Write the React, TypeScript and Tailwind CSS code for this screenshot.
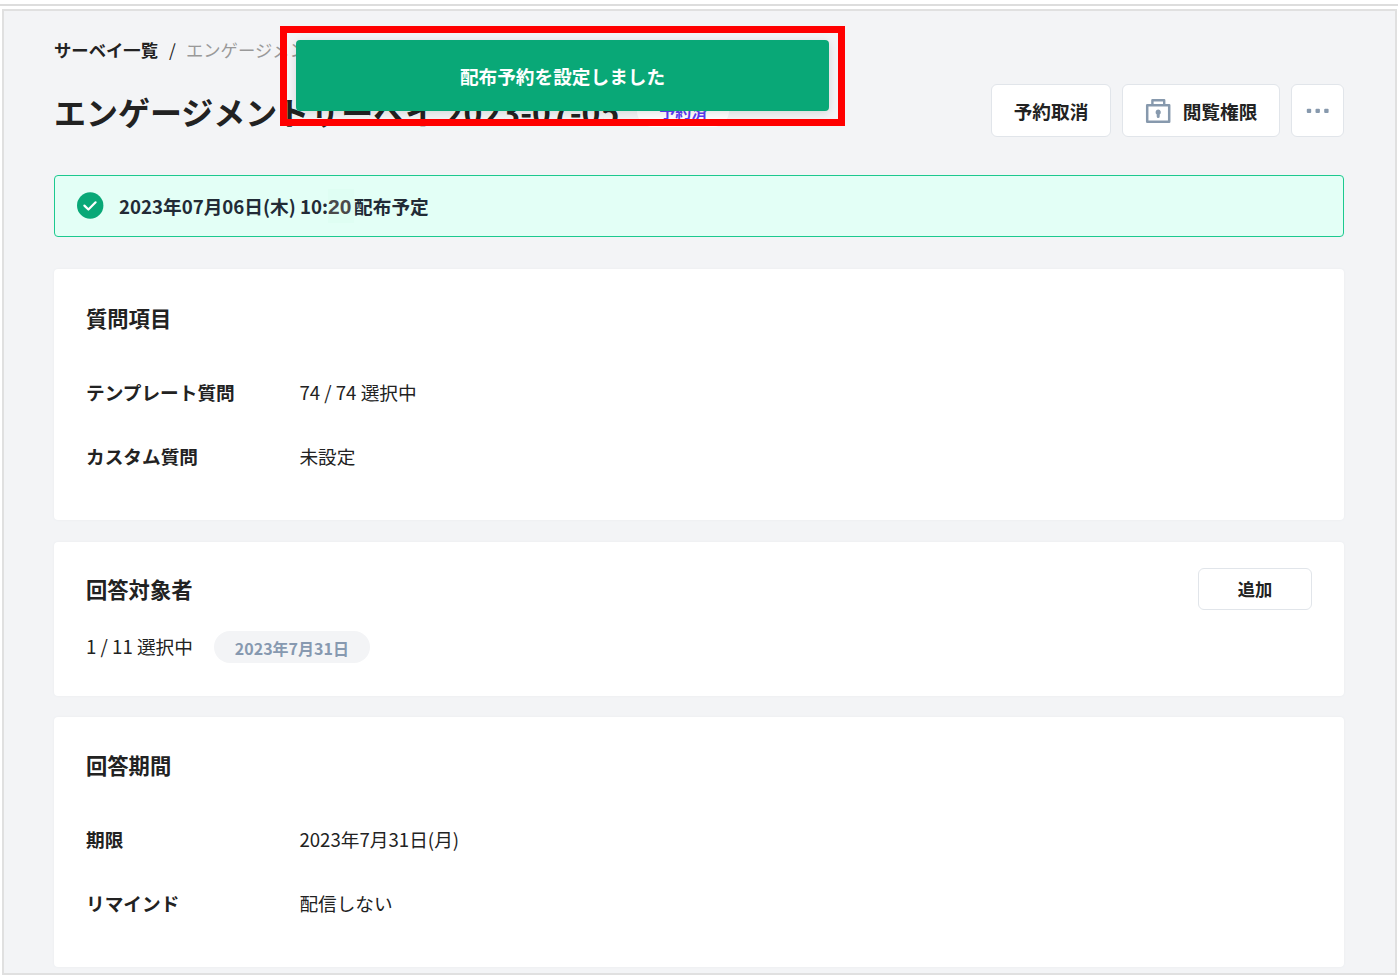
import type { ReactNode } from "react";

type RowProps = {
  label: string;
  value: string;
};

function Row({ label, value }: RowProps) {
  return (
    <div className="flex h-16 items-center text-[18.67px]">
      <span className="w-[213.4px] font-bold">{label}</span>
      <span>{value}</span>
    </div>
  );
}

type CardProps = {
  title: string;
  className: string;
  action?: ReactNode;
  children: ReactNode;
};

function Card({ title, className, action, children }: CardProps) {
  return (
    <section className={`rounded bg-white px-8 shadow-[0_0_2px_#e6e8ec] ${className}`}>
      <div className="flex items-center justify-between">
        <h2 className="text-[21.3px] leading-8 font-bold">{title}</h2>
        {action}
      </div>
      {children}
    </section>
  );
}

function LockIcon() {
  return (
    <svg width="26" height="26" viewBox="0 0 26 26" fill="none">
      <path d="M2.2 7.2h22v16.6h-22z" stroke="#8799ad" strokeWidth="2.5" strokeLinejoin="round" />
      <path d="M7.4 7V2.2h11.8V7" stroke="#8799ad" strokeWidth="2.4" strokeLinejoin="round" />
      <path
        d="M13.2 11.6a2.7 2.7 0 0 1 1.5 4.9v1.9a1.5 1.5 0 0 1-3 0v-1.9a2.7 2.7 0 0 1 1.5-4.9z"
        fill="#8799ad"
      />
    </svg>
  );
}

function CheckIcon() {
  return (
    <svg className="mb-0.5" width="27" height="27" viewBox="0 0 27 27" fill="none">
      <circle cx="13.2" cy="13.5" r="13.2" fill="#09a877" />
      <path
        d="M7.4 13.6l4 3.9 7.2-7.2"
        stroke="#fff"
        strokeWidth="2.2"
        strokeLinecap="round"
        strokeLinejoin="round"
      />
    </svg>
  );
}

function MoreIcon() {
  return (
    <svg width="24" height="6" viewBox="0 0 24 6" fill="#8799ad">
      <rect x="0.8" y="0.8" width="4.4" height="4.2" rx="1" />
      <rect x="9.5" y="0.8" width="4.4" height="4.2" rx="1" />
      <rect x="18.2" y="0.8" width="4.4" height="4.2" rx="1" />
    </svg>
  );
}

function Header() {
  return (
    <header>
      <nav className="flex h-6 items-center text-[17.33px]">
        <span className="font-bold">サーベイ一覧</span>
        <span className="ml-[11px] w-[17px]">/</span>
        <span className="text-[#999]">エンゲージメントサーベイ 2023-07-05</span>
      </nav>
      <div className="mt-[22px] flex h-[53px] items-center">
        <h1 className="text-[32px] leading-[48px] font-bold whitespace-nowrap">
          エンゲージメントサーベイ 2023-07-05
        </h1>
        <span className="ml-[18px] flex h-8 w-[92px] items-center justify-center rounded-full bg-white text-base font-bold text-[#5c3df5]">
          予約済
        </span>
        <div className="ml-auto flex gap-[11px] text-[18.67px] font-bold">
          <button className="h-[53px] w-[120px] rounded-md border border-[#e1e5ea] bg-white">
            予約取消
          </button>
          <button className="flex h-[53px] w-[158px] items-center justify-center gap-3 rounded-md border border-[#e1e5ea] bg-white">
            <LockIcon />
            閲覧権限
          </button>
          <button className="flex h-[53px] w-[53px] items-center justify-center rounded-md border border-[#e1e5ea] bg-white">
            <MoreIcon />
          </button>
        </div>
      </div>
    </header>
  );
}

export default function App() {
  return (
    <div className="relative h-[976px] w-[1398px] overflow-hidden bg-white pt-1 font-['Noto_Sans_CJK_JP',sans-serif] text-[#222]">
      <div className="h-0.5 bg-[#dddddd]" />
      <main className="mt-[3px] ml-0.5 h-[966px] w-[1395px] border-2 border-[#e0e0e0] bg-[#f3f4f6] pt-[27px] pr-[51px] pl-[50px]">
        <Header />
        <div className="mt-[38px] flex h-[62px] items-center rounded border border-[#1cc98f] bg-[#e3fff6] pl-[22px] text-[18.67px] font-bold text-[#222b36]">
          <CheckIcon />
          <p className="ml-[15px] flex items-center">
            2023年07月06日(木) 10:
            <span className="w-[26px] bg-[#dffef3] pt-0.5 font-['Liberation_Sans',sans-serif] text-[21px] text-[#4a4a4a]">
              20
            </span>
            配布予定
          </p>
        </div>

        <Card title="質問項目" className="mt-8 h-[251px] pt-[33px]">
          <div className="mt-[26px]">
            <Row label="テンプレート質問" value="74 / 74 選択中" />
            <Row label="カスタム質問" value="未設定" />
          </div>
        </Card>

        <Card
          title="回答対象者"
          className="mt-[22px] h-[154px] pt-[26px]"
          action={
            <button className="h-[42px] w-[114px] rounded-md border border-[#e1e5ea] bg-white text-[17.33px] font-bold">
              追加
            </button>
          }
        >
          <div className="mt-[21px] flex items-center text-[18.67px]">
            <span className="-mt-0.5">1 / 11 選択中</span>
            <span className="ml-[21px] flex h-8 w-[156px] items-center justify-center rounded-full bg-[#f3f4f6] pt-px text-base font-bold text-[#8799b0]">
              2023年7月31日
            </span>
          </div>
        </Card>

        <Card title="回答期間" className="mt-[21px] h-[250px] pt-8">
          <div className="mt-[26px]">
            <Row label="期限" value="2023年7月31日(月)" />
            <Row label="リマインド" value="配信しない" />
          </div>
        </Card>
      </main>

      {/* toast with its highlight frame */}
      <div className="absolute top-[26px] left-[280px] h-[99.5px] w-[565px] border-7 border-[#ff0000] pt-[7px] pl-[9px]">
        <div className="flex h-[71px] w-[533px] items-center justify-center rounded bg-[#09a877] text-[18.67px] font-bold text-white shadow-[0_2px_10px_rgba(0,0,0,0.12)]">
          配布予約を設定しました
        </div>
      </div>
    </div>
  );
}
